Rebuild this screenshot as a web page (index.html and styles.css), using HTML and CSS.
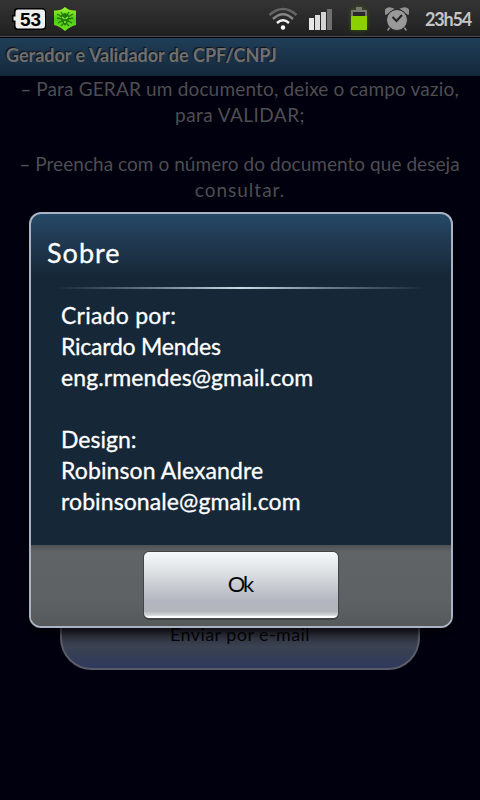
FILE: index.html
```html
<!DOCTYPE html>
<html lang="pt-BR">
<head>
<meta charset="utf-8">
<title>Gerador e Validador de CPF/CNPJ</title>
<link rel="stylesheet" href="styles.css">
</head>
<body>
<header class="status">
  <svg class="level" width="36" height="24" viewBox="0 0 36 24"><path d="M5 1H30Q34 1 34 5V19Q34 23 30 23H5Q2 23 2 19V15H0V8H2V5Q2 1 5 1Z" fill="#000"/><path d="M6 2.500H30Q33 2.500 33 5.500V18.500Q33 21.500 30 21.500H6Q3.500 21.500 3.500 18.500V13.500H1.500V9.500H3.500V5.500Q3.500 2.500 6 2.500Z" fill="#eee"/><text x="18.500" y="18.500" text-anchor="middle">53</text></svg>
  <svg class="shield" width="24" height="26" viewBox="0 0 24 26"><defs><linearGradient id="g" x2="0" y2="1"><stop stop-color="#a0f52d"/><stop offset=".5" stop-color="#50ca13"/><stop offset="1" stop-color="#6be51b"/></linearGradient></defs><path d="M12 1Q16 5 23 4.500V19Q18 20 12 25Q6 20 1 19V4.500Q8 5 12 1Z" fill="url(#g)"/><path d="M4 8L9 11M20 8L15 11M4 12L9 13M20 12L15 13M5 17L9 15M19 17L15 15M8 6L10 9M16 6L14 9M8 20L11 17M16 20L13 17" stroke="#26790f" stroke-width="1.300"/><path d="M8 9L12 7L16 9V14L12 20L8 14Z" fill="#217a0d"/><path d="M9 11L11.500 13M15 11L12.500 13M11 16H13" stroke="#8cf329" stroke-width="1.300"/></svg>
  <div class="indicators">
    <svg width="30" height="24" viewBox="0 0 30 24" fill="none" stroke-width="2.500"><path d="M1.500 8Q15-4 28.500 8" stroke="#656565"/><path d="M5 12Q15 2.500 25 12" stroke="#858585"/><path d="M9 16Q15 10.500 21 16" stroke="#f2f2f2"/><circle cx="15" cy="20.500" r="2.200" fill="#fff"/></svg>
    <svg class="signal" width="24" height="22" viewBox="0 0 24 22"><path d="M0 10H5V22H0Z" fill="#e8e8e8"/><path d="M6 7H11V22H6Z" fill="#ddd"/><path d="M12 4H17V22H12Z" fill="#d5d5d5"/><path d="M18 1H23V22H18Z" fill="#707070"/></svg>
    <svg class="battery" width="18" height="24" viewBox="0 0 18 24"><path d="M6 0H12V3H17V23H1V3H6Z" fill="#777"/><path d="M3 5H15V9H3Z" fill="#292929"/><rect x="1" y="9" width="16" height="14" rx="1" fill="#8bd000"/></svg>
    <svg class="alarm" width="24" height="25" viewBox="0 0 24 25"><path d="M1 7Q-1 1 5 1L8 2ZM23 7Q25 1 19 1L16 2ZM5 20L3 23M19 20L21 23" fill="#929292" stroke="#929292" stroke-width="1.500" stroke-linecap="round"/><circle cx="12" cy="13" r="10.500" fill="#999" stroke="#292929"/><path d="M7.500 10L11.500 14L17 8" fill="none" stroke="#222" stroke-width="2"/></svg>
    <time>23h54</time>
  </div>
</header>
<h1 class="titlebar"><span>Gerador e Validador de CPF/CNPJ</span></h1>
<main class="screen">
  <p><span class="t1"><span class="dash">-</span> Para GERAR um documento, deixe o campo vazio,</span><br><span class="t2">para VALIDAR;</span></p>
  <p><span class="t3"><span class="dash">-</span> Preencha com o número do documento que deseja</span><br><span class="t4">consultar.</span></p>
  <button class="send"><span>Enviar por e-mail</span></button>
</main>
<section class="dialog" role="dialog">
  <h2><span>Sobre</span></h2>
  <div class="divider"></div>
  <div class="content">
    <div><span class="c1">Criado por:</span></div>
    <div><span class="c2">Ricardo Mendes</span></div>
    <div><span class="c3">eng.rmendes@gmail.com</span></div>
    <div class="gap"><span>Design:</span></div>
    <div><span class="c3">Robinson Alexandre</span></div>
    <div><span class="c3">robinsonale@gmail.com</span></div>
  </div>
  <footer><button class="ok">Ok</button></footer>
</section>
</body>
</html>
```
FILE: styles.css
```css
* { box-sizing: border-box; }
body { margin: 0; width: 480px; height: 800px; overflow: hidden; background: #00000f; font-family: Lato, "Open Sans", sans-serif; display: flex; flex-direction: column; }
button { font: inherit; }
h1, h2, p { margin: 0; font-weight: 400; }
span { white-space: nowrap; }
.status { flex: none; height: 37px; padding: 2px 8px 0 12px; display: flex; align-items: center; background: linear-gradient(#343434, #202020); border-bottom: 1px solid #484f52; }
.level text { font: bold 19px "Liberation Sans", sans-serif; fill: #000; }
.shield { margin-left: 5px; }
.indicators { margin-left: auto; display: flex; align-items: center; }
.signal { margin-left: 11px; }
.battery { margin-left: 17px; filter: drop-shadow(0 0 2px #425f08); }
.alarm { margin-left: 17px; }
time { width: 47px; margin-left: 16px; font-size: 18px; font-weight: 700; letter-spacing: -1.200px; color: #c4c4c4; white-space: nowrap; }
.titlebar { flex: none; height: 39px; padding-left: 6px; border-top: 1px solid #000; font-size: 18px; line-height: 35px; font-weight: 700; color: #706f6d; text-shadow: -1px -1px 1px #111; background: linear-gradient(#203e59, #14283a); }
.screen { flex: 1; display: flex; flex-direction: column; align-items: center; font-size: 19px; line-height: 25.500px; color: #4e4e51; text-align: center; }
.screen p { height: 75px; }
.dash { display: inline-block; width: 10px; transform: scaleX(1.600); }
.t1 { letter-spacing: .17px; }
.t2 { letter-spacing: .45px; }
.t3 { letter-spacing: .05px; }
.t4 { letter-spacing: 1px; }
.send { width: 360px; height: 70px; margin-top: 374px; border: 2px solid #5a5c67; border-radius: 0 0 32px 32px; background: linear-gradient(#252630 35%, #3b4252 68%, #2e395c); color: #050507; font-size: 18px; letter-spacing: .42px; padding: 0; display: flex; justify-content: center; align-items: center; }
.dialog { position: absolute; left: 29px; top: 212px; width: 424px; height: 416px; border: 2px solid #aab3c4; border-radius: 12px; overflow: hidden; display: flex; flex-direction: column; color: #fff; background: linear-gradient(#264967, #213a53 25px, #162838 61px, #162838); box-shadow: 0 5px 9px #000b; }
.dialog h2 { height: 73px; padding: 3px 16px 0; line-height: 72px; font-size: 27px; letter-spacing: 1px; -webkit-text-stroke: .3px #fff; }
.divider { height: 2px; margin: 0 25px; background: linear-gradient(90deg, transparent, #718391 28%, #c9dce4 50%, #718391 72%, transparent); }
.content { flex: 1; padding: 11px 30px 0; font-size: 23px; line-height: 31px; -webkit-text-stroke: .3px #fff; }
.content .gap { margin-top: 31px; }
.c1 { letter-spacing: .25px; }
.c2 { letter-spacing: -.23px; }
.c3 { letter-spacing: .1px; }
footer { height: 81px; padding-top: 6px; display: flex; justify-content: center; align-items: flex-start; background: linear-gradient(#4e5153, #616466 7px, #5d6163 70%, #56595a); }
.ok { width: 196px; height: 69px; padding: 0 2px 3px 0; border: 1px solid #424547; border-bottom-width: 2px; border-radius: 6px; background: linear-gradient(#f7fafb, #dfe2e5 28%, #b3b6bf 74%, #b2b7bb 90%, #d4d8da 96%, #fff 98%); color: #070a0d; font-size: 22px; letter-spacing: -2px; }
```
